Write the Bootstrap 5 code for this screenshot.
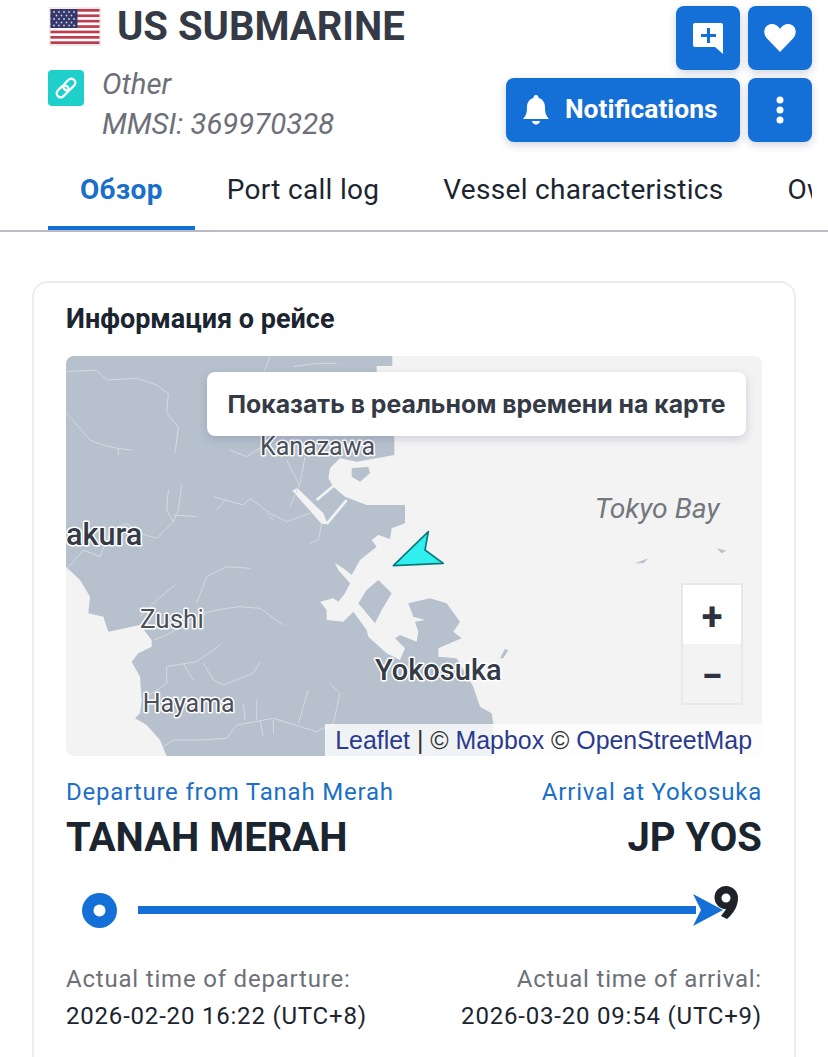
<!DOCTYPE html>
<html lang="en">
<head>
    <meta charset="UTF-8">
    <meta name="viewport" content="width=device-width, initial-scale=1.0">
    <title>US SUBMARINE</title>
    <link href="https://cdn.jsdelivr.net/npm/bootstrap@5.3.0/dist/css/bootstrap.min.css" rel="stylesheet">
    <script src="https://cdn.jsdelivr.net/npm/bootstrap@5.3.0/dist/js/bootstrap.bundle.min.js"></script>
    <style>
        html, body {
            height: 1057px;
            overflow: hidden;
        }
        body {
            background: #fff;
            font-family: Roboto, "Liberation Sans", sans-serif;
            color: #1b2530;
        }
        .vessel-head {
            height: 150px;
            padding: 6px 16px 0 48px;
        }
        .vessel-flag {
            width: 52px;
            height: 39px;
            margin: 1px 16px 0 1px;
        }
        .vessel-name {
            font-size: 40px;
            font-weight: 700;
            line-height: 40px;
            color: #343a46;
            margin: 1px 0 -1px;
        }
        .vessel-type {
            width: 36px;
            height: 36px;
            background: #1fcfc9;
            border-radius: 4px;
            margin: 6px 18px 0 0;
        }
        .vessel-meta {
            font-size: 29.3px;
            font-style: italic;
            line-height: 40px;
            color: #6e7079;
            margin-top: 18px;
        }
        .head-actions {
            width: 306px;
        }
        .head-btn {
            height: 64px;
            min-width: 64px;
            padding: 0;
            background: #1470d6;
            border: 0;
            border-radius: 8px;
            box-shadow: 0 3px 8px rgba(40, 60, 120, .22);
            color: #fff;
            font-size: 26.4px;
            font-weight: 700;
        }
        .head-btn.wide {
            width: 234px;
            padding-left: 17px;
            gap: 16px;
        }
        .tab-bar {
            border-bottom: 2px solid #b9bbc4;
            height: 82px;
        }
        .tab-list {
            margin: 0 16px 0 48px;
            height: 80px;
            flex-wrap: nowrap;
            overflow: hidden;
        }
        .tab-item {
            display: block;
            height: 80px;
            line-height: 80px;
            padding: 0 32px;
            font-size: 28px;
            letter-spacing: .3px;
            color: #1b2530;
            text-decoration: none;
            white-space: nowrap;
        }
        .tab-item.on {
            color: #1a6fc9;
            font-weight: 700;
            border-bottom: 4px solid #1470d6;
        }
        .voyage-card {
            margin: 49px 32px 0;
            border: 2px solid #ebecef;
            border-radius: 16px;
            padding: 16px 32px 0;
            height: 900px;
        }
        .voyage-title {
            font-size: 27px;
            font-weight: 700;
            line-height: 40px;
            margin: 0 0 17px;
            color: #1b2530;
        }
        .map-box {
            height: 400px;
            border-radius: 8px;
            overflow: hidden;
            background: #f3f3f4;
        }
        .map-box svg.map-art {
            display: block;
            width: 696px;
            height: 400px;
        }
        .map-live {
            position: absolute;
            top: 16px;
            right: 16px;
            width: 539px;
            height: 64px;
            background: #fff;
            border-radius: 8px;
            box-shadow: 0 3px 10px rgba(50, 60, 110, .2);
            font-family: Inter, Roboto, sans-serif;
            font-size: 24.8px;
            font-weight: 700;
            line-height: 64px;
            text-align: center;
            color: #343a46;
        }
        .map-zoom {
            position: absolute;
            top: 227px;
            left: 615px;
            width: 62px;
            border: 2px solid #e8e8ea;
        }
        .map-zoom div {
            height: 59px;
            font-size: 38px;
            font-weight: 700;
            line-height: 64px;
            overflow: hidden;
            text-align: center;
            color: #2d3440;
        }
        .map-zoom .plus {
            background: #fff;
        }
        .map-credit {
            position: absolute;
            right: 0;
            bottom: 0;
            height: 32px;
            padding: 0 10px;
            background: rgba(255, 255, 255, .8);
            font-family: "Liberation Sans", Arial, sans-serif;
            font-size: 24.9px;
            line-height: 32px;
            color: #333;
        }
        .map-credit a {
            color: #2b3a8c;
            text-decoration: none;
        }
        .port-label {
            font-size: 24px;
            letter-spacing: .8px;
            line-height: 32px;
            color: #1a6fc9;
            margin-top: 20px;
        }
        .port-name {
            font-size: 40px;
            font-weight: 700;
            line-height: 56px;
            margin-top: 2px;
            color: #1b2530;
        }
        .route-row {
            height: 60px;
            margin-top: 14px;
            padding: 0 23px 0 16px;
        }
        .route-dot {
            margin: 1px 21px 0 0;
        }
        .route-line {
            height: 8px;
            margin-right: -3px;
            background: #1470d6;
        }
        .route-end {
            position: relative;
        }
        .time-label {
            font-size: 24px;
            letter-spacing: .8px;
            line-height: 32px;
            color: #6e7079;
            margin-top: 23px;
        }
        .time-value {
            font-size: 24px;
            letter-spacing: .8px;
            line-height: 32px;
            margin-top: 5px;
            color: #1b2530;
        }
    </style>
</head>
<body>
    <div class="vessel-head d-flex justify-content-between">
        <div>
            <div class="d-flex align-items-start">
                <svg class="vessel-flag" viewBox="0 0 52 39">
                    <rect width="52" height="39" fill="#f4e9ea"/>
                    <rect x="1.5" y="2" width="49" height="35" fill="#fff"/>
                    <g fill="#bd3d50">
                        <rect x="1.5" y="2" width="49" height="2.7"/>
                        <rect x="1.5" y="7.4" width="49" height="2.7"/>
                        <rect x="1.5" y="12.8" width="49" height="2.7"/>
                        <rect x="1.5" y="18.2" width="49" height="2.7"/>
                        <rect x="1.5" y="23.6" width="49" height="2.7"/>
                        <rect x="1.5" y="29" width="49" height="2.7"/>
                        <rect x="1.5" y="34.3" width="49" height="2.7"/>
                    </g>
                    <rect x="1.5" y="2" width="27" height="19" fill="#34386b"/>
                    <g fill="#cfd2e4">
                        <circle cx="5" cy="5" r=".9"/><circle cx="10" cy="5" r=".9"/><circle cx="15" cy="5" r=".9"/><circle cx="20" cy="5" r=".9"/><circle cx="25" cy="5" r=".9"/>
                        <circle cx="7.5" cy="8.5" r=".9"/><circle cx="12.5" cy="8.5" r=".9"/><circle cx="17.5" cy="8.5" r=".9"/><circle cx="22.5" cy="8.5" r=".9"/>
                        <circle cx="5" cy="12" r=".9"/><circle cx="10" cy="12" r=".9"/><circle cx="15" cy="12" r=".9"/><circle cx="20" cy="12" r=".9"/><circle cx="25" cy="12" r=".9"/>
                        <circle cx="7.5" cy="15.5" r=".9"/><circle cx="12.5" cy="15.5" r=".9"/><circle cx="17.5" cy="15.5" r=".9"/><circle cx="22.5" cy="15.5" r=".9"/>
                        <circle cx="5" cy="18.5" r=".9"/><circle cx="10" cy="18.5" r=".9"/><circle cx="15" cy="18.5" r=".9"/><circle cx="20" cy="18.5" r=".9"/><circle cx="25" cy="18.5" r=".9"/>
                    </g>
                </svg>
                <h1 class="vessel-name">US SUBMARINE</h1>
            </div>
            <div class="d-flex align-items-start vessel-meta">
                <div class="vessel-type d-flex align-items-center justify-content-center">
                    <svg width="28" height="28" viewBox="0 0 28 28" fill="none" stroke="#fff" stroke-width="2.300">
                        <g transform="rotate(-45 14 14)">
                            <rect x="2.500" y="10" width="13.500" height="8" rx="4"/>
                            <rect x="12" y="10" width="13.500" height="8" rx="4"/>
                        </g>
                    </svg>
                </div>
                <div>
                    <div>Other</div>
                    <div>MMSI: 369970328</div>
                </div>
            </div>
        </div>
        <div class="head-actions d-flex flex-wrap justify-content-end align-content-start gap-2">
            <button class="btn head-btn d-flex align-items-center justify-content-center" type="button" aria-label="Add note">
                <svg width="32" height="32" viewBox="0 0 32 32">
                    <path d="M3 1h26a2 2 0 0 1 2 2v29l-8-7H3a2 2 0 0 1-2-2V3a2 2 0 0 1 2-2z" fill="#fff"/>
                    <path d="M15 6h3v6h6v3h-6v6h-3v-6H9v-3h6z" fill="#1470d6"/>
                </svg>
            </button>
            <button class="btn head-btn d-flex align-items-center justify-content-center" type="button" aria-label="Favourite">
                <svg width="32" height="30" viewBox="0 0 32 30">
                    <path d="M16 29 3 15.500C-1 11-.500 4.500 4 2c4-2 9-1 12 4 3-5 8-6 12-4 4.500 2.500 5 9 1 13.500z" fill="#fff"/>
                </svg>
            </button>
            <button class="btn head-btn wide d-flex align-items-center justify-content-start" type="button">
                <svg width="26" height="30" viewBox="0 0 26 30">
                    <path d="M13 0a2.500 2.500 0 0 1 2.500 3C20 4.200 22 8 22 12c0 6 1 8.500 4 12H0c3-3.500 4-6 4-12 0-4 2-7.800 6.500-9A2.500 2.500 0 0 1 13 0zM9 26h8c0 2-2 3.500-4 3.500S9 28 9 26z" fill="#fff"/>
                </svg>
                <span>Notifications</span>
            </button>
            <button class="btn head-btn d-flex align-items-center justify-content-center" type="button" aria-label="More">
                <svg width="8" height="28" viewBox="0 0 8 28" fill="#fff">
                    <circle cx="4" cy="4" r="3.500"/><circle cx="4" cy="14" r="3.500"/><circle cx="4" cy="24" r="3.500"/>
                </svg>
            </button>
        </div>
    </div>

    <div class="tab-bar">
        <nav class="nav tab-list">
            <a class="tab-item on" href="#">Обзор</a>
            <a class="tab-item" href="#">Port call log</a>
            <a class="tab-item" href="#">Vessel characteristics</a>
            <a class="tab-item" href="#">Owners</a>
        </nav>
    </div>

    <div class="voyage-card">
        <h2 class="voyage-title">Информация о рейсе</h2>
        <div class="map-box position-relative">
            <svg class="map-art" viewBox="18 18 2088 1200">
                <path fill="#b6c1cd" d="M18 18H997V48H950V258H1003V315L890 335 840 325 810 355 805 385 820 410 855 440 920 465 1035 465 1035 520 995 535 990 567 955 555 935 570 950 590 900 630 875 675 850 655 825 640 835 660 870 700 855 730 835 755 820 745 780 755 800 780 800 810 850 815 880 785 920 840 925 860 980 910 1020 930 1035 895 1005 865 1020 855 1070 875 1075 845 1065 815 1095 810 1060 800 1045 760 1110 745 1160 760 1200 815 1180 845 1205 865 1135 895 1135 920 1190 925 1240 1010 1250 1040 1260 1070 1295 1090 1300 1120V1218H320L300 1170 260 1125 225 1105 240 1090 245 1050 240 980 215 935 235 910 275 890 275 870 240 825 145 845 130 800 85 790 90 740 60 690 18 650Z"/>
                <g fill="#b6c1cd">
                    <path d="M955 690 995 730 965 780 945 820 895 760 920 720Z"/>
                    <path d="M875 355 925 350 930 370 900 395 875 380Z"/>
                    <path d="M1970 595 1998 602 1985 610Z"/>
                    <path d="M1725 640 1765 625 1750 640Z"/>
                    <path d="M1320 925 1335 897 1345 900 1330 925Z"/>
                </g>
                <path fill="#f3f3f4" d="M697 422 712 414 790 490 803 522 785 522Z"/>
                <g fill="none" stroke="#f3f3f4" stroke-width="8">
                    <path d="M770 450 830 400"/>
                    <path d="M800 522 860 450"/>
                </g>
                <g fill="none" stroke="#d3dae2" stroke-width="3" stroke-linejoin="round">
                    <path d="M20 65 110 60 140 90 230 85 290 105 325 130 320 190 355 230 345 310"/>
                    <path d="M20 190 60 235 90 270 130 285 170 295 215 300"/>
                    <path d="M175 295V315"/>
                    <path d="M365 405 355 480 340 515 290 565 240 550 200 520 150 545 120 620 70 600 18 660"/>
                    <path d="M325 420 320 480 340 515"/>
                    <path d="M340 495 410 500"/>
                    <path d="M460 440 495 450 470 480"/>
                    <path d="M495 450 550 465 570 445 630 490 680 515 750 490"/>
                    <path d="M620 490 640 510"/>
                    <path d="M785 520 775 570 750 580"/>
                    <path d="M680 330 720 410"/>
                    <path d="M735 320 720 400 690 470"/>
                    <path d="M570 655 500 650 440 680 410 760"/>
                    <path d="M345 705 290 750 240 800"/>
                    <path d="M425 790 500 775 540 770 600 775 670 825"/>
                    <path d="M280 870 310 860 440 790"/>
                    <path d="M480 885 410 935 320 950 320 1000 260 1040"/>
                    <path d="M370 940 400 990"/>
                    <path d="M430 940 460 990 490 1005 580 970 600 935"/>
                    <path d="M745 1020 715 1120"/>
                    <path d="M810 1000 840 1030 820 1120 770 1145 640 1105 530 1125 500 1165 420 1170 340 1170 310 1190"/>
                    <path d="M590 1050V1110"/>
                    <path d="M550 1060 555 1110"/>
                    <path d="M640 1110V1150"/>
                    <path d="M600 1110 610 1160"/>
                    <path d="M630 20 610 70"/>
                    <path d="M700 50 770 40 830 40"/>
                    <path d="M510 300 560 320 600 295"/>
                </g>
                <g font-family="Roboto, sans-serif" stroke="#fff" stroke-width="9" paint-order="stroke" stroke-linejoin="round" fill="#4a4f5a">
                    <text x="600" y="315" font-size="75">Kanazawa</text>
                    <text x="18" y="585" font-size="92" font-weight="500" fill="#343a46">akura</text>
                    <text x="240" y="835" font-size="78">Zushi</text>
                    <text x="248" y="1087" font-size="75">Hayama</text>
                    <text x="945" y="990" font-size="87" font-weight="500" fill="#343a46">Yokosuka</text>
                </g>
                <text x="1604" y="505" font-family="Roboto, sans-serif" font-size="85" font-style="italic" fill="#74777d">Tokyo Bay</text>
                <path d="M1000 647 1105 545 1095 600 1150 640Z" fill="#2ff0ee" stroke="#0a7b7b" stroke-width="5" stroke-linejoin="round"/>
            </svg>
            <div class="map-live">Показать в реальном времени на карте</div>
            <div class="map-zoom">
                <div class="plus">+</div>
                <div>&minus;</div>
            </div>
            <div class="map-credit"><a href="#">Leaflet</a> | © <a href="#">Mapbox</a> © <a href="#">OpenStreetMap</a></div>
        </div>

        <div class="d-flex justify-content-between">
            <div>
                <div class="port-label">Departure from Tanah Merah</div>
                <div class="port-name">TANAH MERAH</div>
            </div>
            <div class="text-end">
                <div class="port-label">Arrival at Yokosuka</div>
                <div class="port-name">JP YOS</div>
            </div>
        </div>

        <div class="route-row d-flex align-items-center">
            <svg class="route-dot flex-shrink-0" width="35" height="35" viewBox="0 0 35 35">
                <circle cx="17.500" cy="17.500" r="17.500" fill="#1470d6"/>
                <circle cx="17.500" cy="17.500" r="6" fill="#fff"/>
            </svg>
            <div class="route-line flex-grow-1"></div>
            <svg class="route-end flex-shrink-0" width="46" height="60" viewBox="0 0 46 60">
                <path fill-rule="evenodd" d="M33 6a12 12 0 0 1 12 12c0 8-4 15-11 21l-6-3c2-3 4-5 5-7a11 11 0 0 1 0-23zm0 7.500a4.500 4.500 0 1 0 0 9 4.500 4.500 0 0 0 0-9z" fill="#1e2329"/>
                <path d="M0 14 30 30 0 46 8 30Z" fill="#1470d6"/>
            </svg>
        </div>

        <div class="d-flex justify-content-between">
            <div>
                <div class="time-label">Actual time of departure:</div>
                <div class="time-value">2026-02-20 16:22 (UTC+8)</div>
            </div>
            <div class="text-end">
                <div class="time-label">Actual time of arrival:</div>
                <div class="time-value">2026-03-20 09:54 (UTC+9)</div>
            </div>
        </div>
    </div>
</body>
</html>
